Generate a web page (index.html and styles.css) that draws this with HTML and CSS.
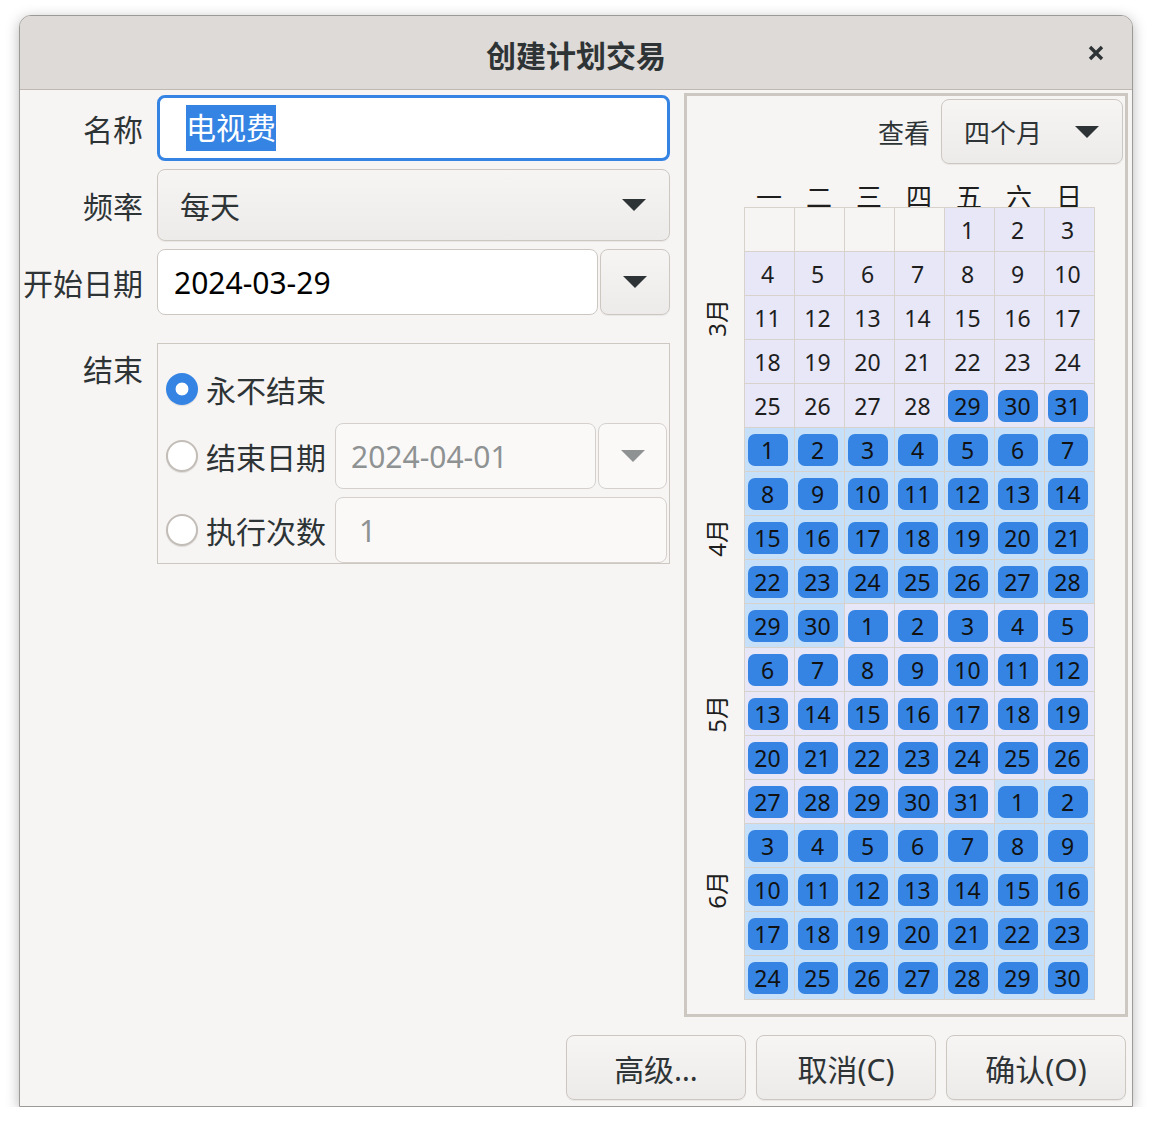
FILE: index.html
```html
<!DOCTYPE html>
<html lang="zh-CN">
<head>
  <meta charset="UTF-8" />
  <title>创建计划交易</title>
  <link rel="stylesheet" href="styles.css">
</head>
<body>

  <div class="window" role="dialog" aria-labelledby="dialogTitle">
    <header class="titlebar">
      <span></span>
      <h1 id="dialogTitle" class="title">创建计划交易</h1>
      <button class="close-btn" aria-label="关闭">
        <svg width="16" height="16" viewBox="0 0 16 16"><path d="M2 2 L14 14 M14 2 L2 14" stroke="#2e3436" stroke-width="3.4" fill="none"/></svg>
      </button>
    </header>

    <div class="main">
      <!-- Left side: the form -->
      <div class="form">
        <label class="field-label">名称</label>
        <div class="entry focused"><span class="selection">电视费</span></div>

        <label class="field-label">频率</label>
        <div class="combo">
          <span>每天</span>
          <svg class="arrow" width="24" height="12" viewBox="0 0 24 12"><polygon points="0,0 24,0 12,12"/></svg>
        </div>

        <label class="field-label">开始日期</label>
        <div class="date-row">
          <div class="entry">2024-03-29</div>
          <button class="date-btn"><svg class="arrow" width="24" height="12" viewBox="0 0 24 12"><polygon points="0,0 24,0 12,12"/></svg></button>
        </div>

        <label class="field-label end-label">结束</label>
        <div class="end-frame">
          <div class="radio-row">
            <span class="radio checked"></span>
            <span class="radio-label">永不结束</span>
          </div>
          <div class="radio-row">
            <span class="radio"></span>
            <span class="radio-label">结束日期</span>
            <div class="date-row">
              <div class="entry disabled">2024-04-01</div>
              <button class="date-btn disabled"><svg class="arrow" width="24" height="12" viewBox="0 0 24 12"><polygon points="0,0 24,0 12,12"/></svg></button>
            </div>
          </div>
          <div class="radio-row">
            <span class="radio"></span>
            <span class="radio-label">执行次数</span>
            <div class="entry disabled spin">1</div>
          </div>
        </div>
      </div>

      <!-- Right side: calendar preview -->
      <div class="cal-frame">
        <div class="view-row">
          <span>查看</span>
          <div class="combo small">
            <span>四个月</span>
            <svg class="arrow" width="24" height="12" viewBox="0 0 24 12"><polygon points="0,0 24,0 12,12"/></svg>
          </div>
        </div>

        <div class="calendar">
          <div class="weekdays">
            <span>一</span><span>二</span><span>三</span><span>四</span><span>五</span><span>六</span><span>日</span>
          </div>
          <div class="months" id="months"></div>
          <div class="days" id="days"></div>
        </div>
      </div>
    </div>

    <footer class="actions">
      <button class="action-btn">高级…</button>
      <button class="action-btn">取消(C)</button>
      <button class="action-btn">确认(O)</button>
    </footer>
  </div>

<script>
  const daysEl = document.getElementById('days');
  const monthsEl = document.getElementById('months');

  // grid starts on the Monday before March 1st
  const gridStart = new Date(2024, 1, 26);
  const firstDay = new Date(2024, 2, 1);
  const lastDay = new Date(2024, 5, 30);
  const pickedFrom = new Date(2024, 2, 29);

  function rowOf(date) {
    const days = Math.round((date - gridStart) / 864e5);
    return Math.floor(days / 7);
  }

  for (let i = 0; i < 18 * 7; i++) {
    const d = new Date(2024, 1, 26 + i);
    const cell = document.createElement('div');
    cell.className = 'day';
    if (d >= firstDay && d <= lastDay) {
      cell.classList.add(d.getMonth() % 2 === 0 ? 'month-a' : 'month-b');
      const num = document.createElement('span');
      num.className = 'num';
      if (d >= pickedFrom) num.classList.add('picked');
      num.textContent = d.getDate();
      cell.appendChild(num);
    }
    daysEl.appendChild(cell);
  }

  // month labels span every row that holds one of its days
  [2, 3, 4, 5].forEach(m => {
    const label = document.createElement('span');
    label.className = 'month-label';
    label.textContent = (m + 1) + '月';
    const from = rowOf(new Date(2024, m, 1));
    const to = rowOf(new Date(2024, m + 1, 0));
    label.style.gridRow = (from + 1) + ' / ' + (to + 2);
    monthsEl.appendChild(label);
  });
</script>
</body>
</html>
```

FILE: styles.css
```css
* {
  box-sizing: border-box;
}
body {
  margin: 0;
  background: #ffffff;
  font-family: 'Noto Sans', 'Noto Sans CJK SC', sans-serif;
  color: #2e3436;
}

button {
  font-family: inherit;
  color: inherit;
  cursor: pointer;
}

.window {
  margin: 15px 0 0 19px;
  width: 1114px;
  height: 1092px;
  border: 1px solid #9c9a97;
  border-radius: 12px 12px 0 0;
  background: #f6f5f4;
  box-shadow: 0 3px 14px rgba(0,0,0,0.28);
  display: flex;
  flex-direction: column;
  overflow: hidden;
}

/* Title bar */
.titlebar {
  height: 74px;
  flex: none;
  background: #dedad7;
  border-bottom: 1px solid #bfb8b1;
  display: grid;
  grid-template-columns: 1fr auto 1fr;
  align-items: center;
}
.title {
  margin: 0;
  padding-top: 2px;
  font-size: 30px;
  font-weight: 700;
  color: #2e3436;
}
.close-btn {
  justify-self: end;
  margin-right: 27px;
  width: 18px;
  height: 18px;
  padding: 0;
  border: none;
  background: none;
  display: flex;
  align-items: center;
  justify-content: center;
}

.main {
  display: flex;
  align-items: flex-start;
  padding-top: 3px;
  flex: none;
}

/* Form on the left */
.form {
  width: 664px;
  margin-top: 2px;
  display: grid;
  grid-template-columns: 123px 513px;
  grid-template-rows: 66px 72px 66px auto;
  column-gap: 14px;
  row-gap: 8px;
  font-size: 30px;
}
.field-label {
  align-self: center;
  text-align: right;
  white-space: nowrap;
  color: #2e3436;
}
.end-label {
  align-self: start;
  margin-top: 27px;
  line-height: 40px;
}

.entry {
  height: 66px;
  background: #ffffff;
  border: 1px solid #cdc7c2;
  border-radius: 8px;
  padding-left: 16px;
  display: flex;
  align-items: center;
  color: #000000;
  white-space: nowrap;
}
.entry.focused {
  border: 3px solid #3584e4;
  padding-left: 26px;
}
.selection {
  display: inline-block;
  line-height: 46px;
  background: #3584e4;
  color: #ffffff;
}
.entry.disabled {
  background: #faf9f8;
  border-color: #d5d0cc;
  color: #8f9293;
  padding-left: 15px;
}
.entry.spin {
  flex: 1;
  padding-left: 23px;
}

.combo {
  height: 72px;
  background: linear-gradient(#f6f5f4, #edebe9);
  border: 1px solid #cdc7c2;
  border-radius: 8px;
  box-shadow: 0 1px 1px rgba(0,0,0,0.06);
  padding: 0 23px 0 22px;
  display: flex;
  align-items: center;
  justify-content: space-between;
}
.arrow {
  fill: #2e3436;
  flex: none;
}

.date-row {
  display: flex;
  gap: 2px;
}
.date-row .entry {
  flex: 1;
}
.date-btn {
  width: 70px;
  height: 66px;
  padding: 0;
  background: linear-gradient(#f6f5f4, #edebe9);
  border: 1px solid #cdc7c2;
  border-radius: 8px;
  box-shadow: 0 1px 1px rgba(0,0,0,0.06);
  display: flex;
  align-items: center;
  justify-content: center;
}
.date-btn.disabled {
  background: #faf9f8;
  border-color: #d5d0cc;
  box-shadow: none;
}
.date-btn.disabled .arrow {
  fill: #8f9293;
}

.end-frame {
  margin-top: 20px;
  border: 1px solid #cdc7c2;
  padding: 19px 2px 0 8px;
  display: flex;
  flex-direction: column;
  gap: 8px;
}
.radio-row {
  display: flex;
  align-items: center;
  height: 66px;
}
.radio-row:first-child {
  height: 52px;
}
.radio-row .date-row {
  flex: 1;
}
.radio-row .date-btn {
  width: 69px;
}
.radio {
  width: 32px;
  height: 32px;
  flex: none;
  border-radius: 50%;
  background: #ffffff;
  border: 2px solid #c3bdb7;
  box-shadow: 0 1px 1px rgba(0,0,0,0.1);
}
.radio.checked {
  border: none;
  background: radial-gradient(circle, #ffffff 0 6px, #3584e4 6.8px);
}
.radio-label {
  width: 137px;
  padding-left: 8px;
  flex: none;
  white-space: nowrap;
}

/* Calendar on the right */
.cal-frame {
  width: 444px;
  height: 924px;
  border: 3px solid #cdc7c2;
  padding: 3px 2px 0 0;
}
.view-row {
  display: flex;
  justify-content: flex-end;
  align-items: center;
  gap: 11px;
  font-size: 26px;
}
.combo.small {
  width: 182px;
  height: 65px;
  padding-left: 22px;
}

.calendar {
  margin-top: 16px;
  display: grid;
  grid-template-columns: 57px 351px;
  grid-template-rows: 27px auto;
}
.weekdays {
  grid-column: 2;
  display: grid;
  grid-template-columns: repeat(7, 50px);
  padding-top: 4px;
  height: 27px;
  font-size: 26px;
  line-height: 27px;
  text-align: center;
  color: #1e1e1e;
}
.months {
  grid-column: 1;
  grid-row: 2;
  display: grid;
  grid-template-rows: repeat(18, 44px);
  padding-top: 1px;
}
.month-label {
  grid-column: 1;
  justify-self: center;
  align-self: center;
  writing-mode: vertical-rl;
  text-orientation: sideways;
  transform: rotate(180deg);
  font-size: 24px;
  color: #1e1e1e;
}
.days {
  grid-column: 2;
  grid-row: 2;
  display: grid;
  grid-template-columns: repeat(7, 49px);
  grid-template-rows: repeat(18, 43px);
  gap: 1px;
  padding: 1px;
  background: #d8d2cc;
}
.day {
  background: #f6f5f4;
  display: grid;
  place-items: center;
}
.day.month-a {
  background: #e7e7f8;
}
.day.month-b {
  background: #c7e0fa;
}
.num {
  width: 40px;
  height: 32px;
  margin: 1px 4px 0 0;
  display: flex;
  align-items: center;
  justify-content: center;
  font-size: 23px;
  color: #1e1e1e;
}
.num.picked {
  background: #3584e4;
  border-radius: 7px;
  color: #111111;
}

/* Bottom buttons */
.actions {
  display: flex;
  justify-content: flex-end;
  gap: 10px;
  padding: 18px 6px 6px 0;
}
.action-btn {
  width: 180px;
  height: 65px;
  font-size: 30px;
  background: linear-gradient(#f6f5f4, #edebe9);
  border: 1px solid #cdc7c2;
  border-radius: 8px;
  box-shadow: 0 1px 1px rgba(0,0,0,0.06);
  color: #2e3436;
}
```
